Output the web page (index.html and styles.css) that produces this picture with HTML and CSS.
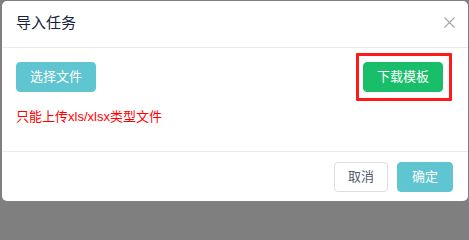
FILE: index.html
```html
<!DOCTYPE html>
<html lang="zh-CN">
<head>
<meta charset="utf-8">
<title>导入任务</title>
<link rel="stylesheet" href="styles.css">
</head>
<body>
<div class="modal">
  <div class="modal-header">
    <div class="modal-title">导入任务</div>
    <span class="modal-close" aria-label="关闭">
      <svg width="11" height="11" viewBox="0 0 11 11"><path d="M0.5 0.5 L10.5 10.5 M10.5 0.5 L0.5 10.5" stroke="#a6a6a6" stroke-width="1.1" fill="none"/></svg>
    </span>
  </div>
  <div class="modal-body">
    <div class="body-row">
      <button class="btn btn-teal btn-wide">选择文件</button>
      <button class="btn btn-green btn-wide highlight">下载模板</button>
    </div>
    <div class="hint">只能上传xls/xlsx类型文件</div>
  </div>
  <div class="modal-footer">
    <button class="btn btn-default btn-cancel">取消</button>
    <button class="btn btn-teal btn-ok">确定</button>
  </div>
</div>
</body>
</html>
```

FILE: styles.css
```css
html, body {
  margin: 0;
  padding: 0;
  background: #7f7f7f;
}

body {
  font-family: "Liberation Sans", "Noto Sans CJK SC", sans-serif;
}

.modal {
  margin: 1px 1px 0 2px;
  width: 466px;
  height: 200px;
  background: #fff;
  border-radius: 5px;
  display: flex;
  flex-direction: column;
  box-sizing: border-box;
}

.modal-header {
  height: 47px;
  box-sizing: border-box;
  border-bottom: 1px solid #e8eaec;
  display: flex;
  justify-content: space-between;
  align-items: flex-start;
  padding: 13px 14px 0 14px;
}

.modal-title {
  font-size: 15px;
  line-height: 18px;
  color: #17233d;
}

.modal-close {
  display: flex;
  margin-top: 3px;
  margin-right: -1px;
}

.modal-body {
  height: 103px;
  box-sizing: border-box;
  padding: 14px 25px 0 14px;
}

.body-row {
  display: flex;
  justify-content: space-between;
  align-items: center;
}

.btn {
  height: 30px;
  box-sizing: border-box;
  border: 1px solid transparent;
  border-radius: 4px;
  font-family: "Liberation Sans", "Noto Sans CJK SC", sans-serif;
  font-size: 13px;
  line-height: 28px;
  color: #fff;
  margin: 0;
  cursor: pointer;
}

.btn-wide {
  padding: 0 13px;
}

.btn-teal {
  background: #5fc5d0;
  border-color: #5fc5d0;
}

.btn-green {
  background: #19be6b;
  border-color: #19be6b;
}

.btn-default {
  background: #fff;
  border-color: #dcdee2;
  color: #515a6e;
}

.highlight {
  position: relative;
}

.highlight::after {
  content: "";
  position: absolute;
  top: -10px;
  bottom: -10px;
  left: -8px;
  right: -10px;
  border: 3px solid #ff1a1a;
  border-radius: 1px;
  pointer-events: none;
}

.hint {
  margin-top: 16px;
  font-size: 13px;
  line-height: 18px;
  color: #ff0000;
}

.modal-footer {
  border-top: 1px solid #e8eaec;
  display: flex;
  justify-content: flex-end;
  gap: 9px;
  padding: 10px 15px 0 0;
}

.btn-cancel {
  padding: 0 13px;
}

.btn-ok {
  padding: 0 14px;
}
```
